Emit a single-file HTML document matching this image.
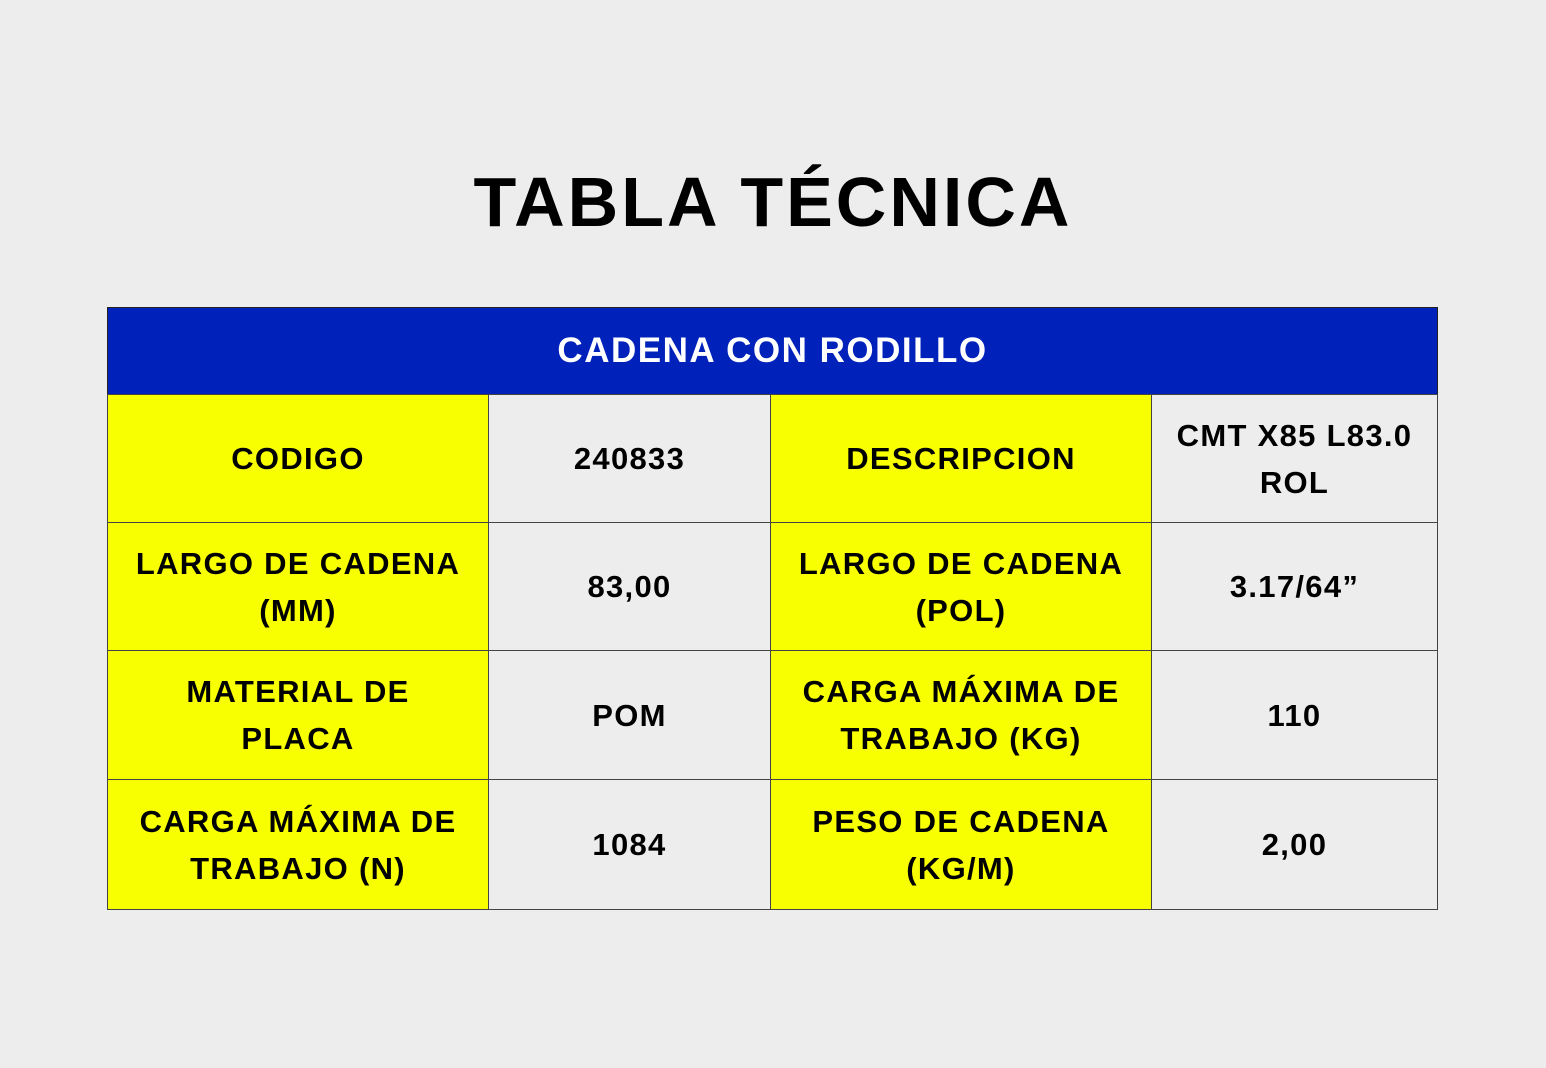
<!DOCTYPE html>
<html><head><meta charset="utf-8"><style>
*{margin:0;padding:0;box-sizing:border-box}
body{width:1546px;height:1068px;background:#ededed;font-family:"Liberation Sans",Arial,sans-serif;font-weight:bold;position:relative;overflow:hidden}
h1{position:absolute;left:0;width:1546px;top:162px;text-align:center;font-size:70px;line-height:80px;letter-spacing:3px;color:#000}
.c{position:absolute;display:flex;align-items:center;justify-content:center;text-align:center;font-size:31px;line-height:47px;color:#000;border:1px solid #444;letter-spacing:1.3px}
.y{background:#f8ff00}
.g{background:#ededed}
.hd{position:absolute;left:107px;top:307px;width:1331px;height:88px;background:#0022bb;border:1px solid #222;color:#fff;font-size:35px;display:flex;align-items:center;justify-content:center;letter-spacing:1.5px}
</style></head><body>
<h1>TABLA TÉCNICA</h1>
<div class="hd">CADENA CON RODILLO</div>

<div class="c y" style="left:107px;top:394px;width:382px;height:129px">CODIGO</div>
<div class="c g" style="left:488px;top:394px;width:283px;height:129px">240833</div>
<div class="c y" style="left:770px;top:394px;width:382px;height:129px">DESCRIPCION</div>
<div class="c g" style="left:1151px;top:394px;width:287px;height:129px">CMT X85 L83.0<br>ROL</div>

<div class="c y" style="left:107px;top:522px;width:382px;height:129px">LARGO DE CADENA<br>(MM)</div>
<div class="c g" style="left:488px;top:522px;width:283px;height:129px">83,00</div>
<div class="c y" style="left:770px;top:522px;width:382px;height:129px">LARGO DE CADENA<br>(POL)</div>
<div class="c g" style="left:1151px;top:522px;width:287px;height:129px">3.17/64”</div>

<div class="c y" style="left:107px;top:650px;width:382px;height:130px">MATERIAL DE<br>PLACA</div>
<div class="c g" style="left:488px;top:650px;width:283px;height:130px">POM</div>
<div class="c y" style="left:770px;top:650px;width:382px;height:130px">CARGA MÁXIMA DE<br>TRABAJO (KG)</div>
<div class="c g" style="left:1151px;top:650px;width:287px;height:130px">110</div>

<div class="c y" style="left:107px;top:779px;width:382px;height:131px">CARGA MÁXIMA DE<br>TRABAJO (N)</div>
<div class="c g" style="left:488px;top:779px;width:283px;height:131px">1084</div>
<div class="c y" style="left:770px;top:779px;width:382px;height:131px">PESO DE CADENA<br>(KG/M)</div>
<div class="c g" style="left:1151px;top:779px;width:287px;height:131px">2,00</div>
</body></html>
